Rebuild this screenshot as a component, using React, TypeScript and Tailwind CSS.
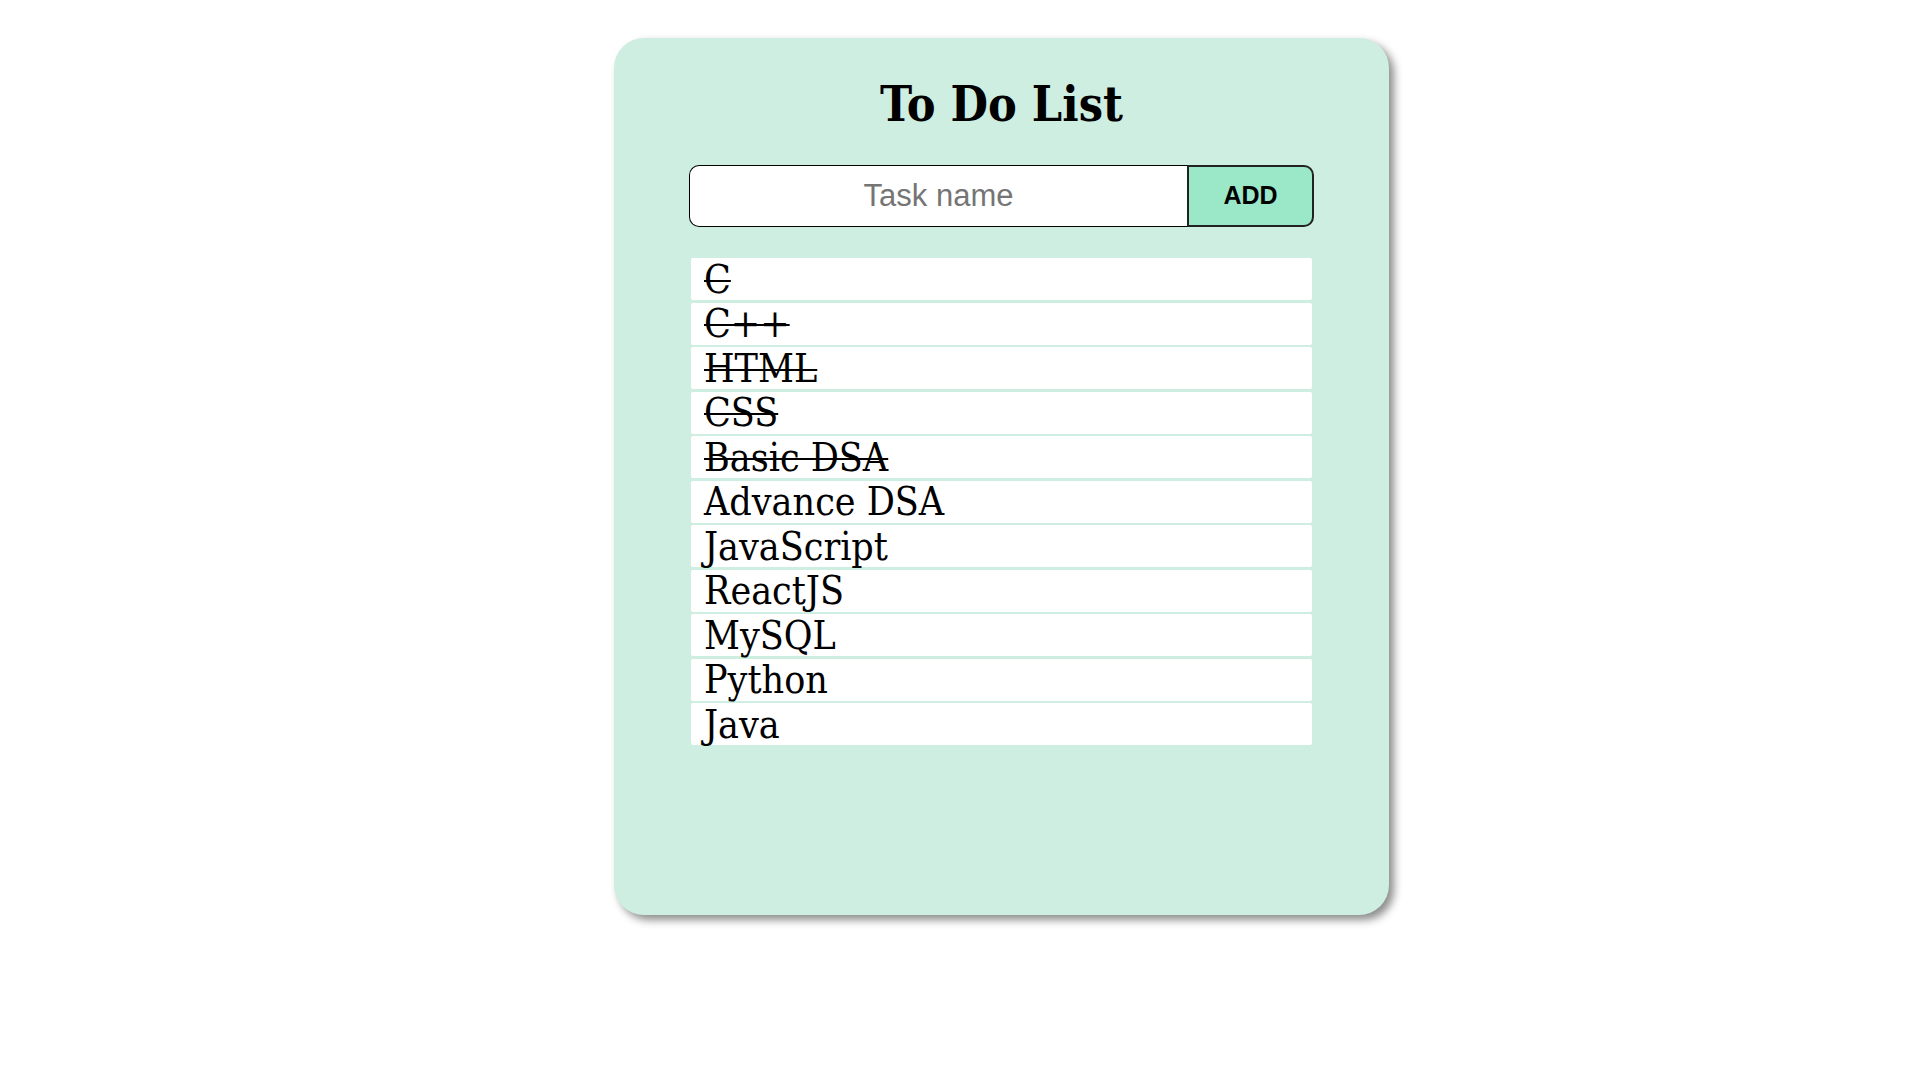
import { useState } from 'react'

interface Task {
  name: string
  done: boolean
}

const initialTasks: Task[] = [
  { name: 'C', done: true },
  { name: 'C++', done: true },
  { name: 'HTML', done: true },
  { name: 'CSS', done: true },
  { name: 'Basic DSA', done: true },
  { name: 'Advance DSA', done: false },
  { name: 'JavaScript', done: false },
  { name: 'ReactJS', done: false },
  { name: 'MySQL', done: false },
  { name: 'Python', done: false },
  { name: 'Java', done: false },
]

export default function App() {
  const [tasks, setTasks] = useState<Task[]>(initialTasks)
  const [input, setInput] = useState('')

  const addTask = () => {
    if (!input.trim()) return
    setTasks([...tasks, { name: input.trim(), done: false }])
    setInput('')
  }

  const toggle = (i: number) => {
    setTasks(tasks.map((t, idx) => (idx === i ? { ...t, done: !t.done } : t)))
  }

  return (
    <div className="min-h-screen bg-white pt-[38px] pl-[614px]">
      {/* Card */}
      <div className="w-[775px] h-[877px] rounded-[30px] bg-[#ceeee1] shadow-[5px_5px_8px_rgba(0,0,0,0.45)] px-[75px] flex flex-col">
        <h1 className="mt-[36px] text-center text-[48px] leading-[60px] font-bold text-black font-['DejaVu_Serif_Condensed',serif]">
          To Do List
        </h1>

        {/* Input row */}
        <div className="mt-[31px] flex h-[62px]">
          <input
            value={input}
            onChange={(e) => setInput(e.target.value)}
            placeholder="Task name"
            className="flex-1 min-w-0 h-full bg-white border border-black border-r-0 rounded-l-[10px] text-center text-[31px] text-black placeholder:text-[#757575] outline-none font-['Liberation_Sans',Arial,sans-serif]"
          />
          <button
            onClick={addTask}
            className="w-[127px] h-full bg-[#9be8c8] border-2 border-[#222] rounded-r-[10px] text-[25px] font-bold text-black font-['Liberation_Sans',Arial,sans-serif]"
          >
            ADD
          </button>
        </div>

        {/* Task list */}
        <ul className="mt-[31px] mx-[2px] flex flex-col gap-[2.5px]">
          {tasks.map((t, i) => (
            <li
              key={i}
              onClick={() => toggle(i)}
              className={`h-[42px] bg-white rounded-[2px] pl-[13px] flex items-center text-[39px] leading-none text-black cursor-pointer font-['DejaVu_Serif_Condensed',serif] ${
                t.done ? 'line-through decoration-[2px]' : ''
              }`}
            >
              {t.name}
            </li>
          ))}
        </ul>
      </div>
    </div>
  )
}
